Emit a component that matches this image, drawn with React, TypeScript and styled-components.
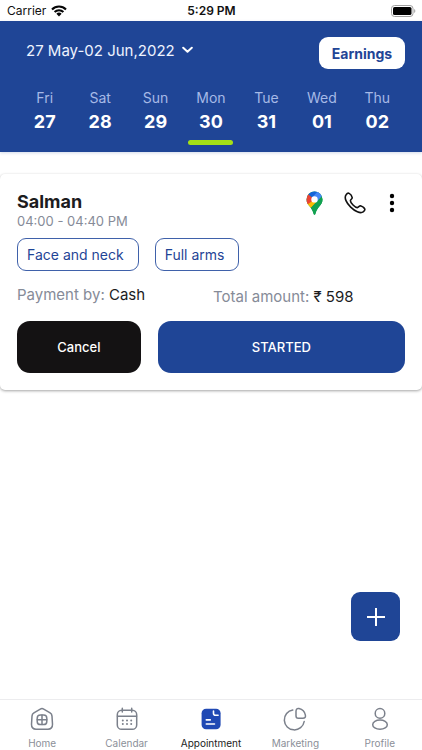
import React from "react";
import styled, { createGlobalStyle } from "styled-components";

const blue = "#1f4596";
const grey = "#868b98";
const ink = "#1c1c1e";

const GlobalStyle = createGlobalStyle`
  * { box-sizing: border-box; }
  body { margin: 0; background: #fff; font-family: Inter, "Liberation Sans", sans-serif; }
  button { font: inherit; border: 0; padding: 0; background: none; cursor: pointer; }
  h2, p { margin: 0; }
  svg { display: block; }
`;

const Screen = styled.div`
  min-height: 100vh;
  display: flex;
  flex-direction: column;
  position: relative;
`;

const StatusBar = styled.div`
  display: grid;
  grid-template-columns: 1fr auto 1fr;
  align-items: center;
  height: 21px;
  padding: 0 6px 0 7px;
  font-size: 12px;
  color: #111;
`;

const Carrier = styled.span`
  display: flex;
  align-items: center;
  gap: 5px;
`;

const Clock = styled.span`
  font-weight: 600;
`;

const Battery = styled.span`
  justify-self: end;
`;

const Header = styled.header`
  background: ${blue};
  color: #fff;
  padding: 16px 17px 7px;
  box-shadow: 0 1px 3px rgba(31, 69, 150, 0.2);
`;

const HeaderTop = styled.div`
  display: flex;
  justify-content: space-between;
  align-items: center;
  padding-left: 9px;
`;

const RangeButton = styled.button`
  display: flex;
  align-items: center;
  gap: 7px;
  height: 24px;
  margin-bottom: 6px;
  color: #eef3ff;
  font-size: 15px;
`;

const EarningsButton = styled.button`
  width: 86px;
  height: 32px;
  border-radius: 9px;
  background: #fff;
  color: ${blue};
  font-size: 14px;
  font-weight: 700;
`;

const Week = styled.div`
  display: grid;
  grid-template-columns: repeat(7, 1fr);
  margin-top: 19px;
`;

const Day = styled.button<{ $active?: boolean }>`
  display: flex;
  flex-direction: column;
  align-items: center;
  color: #fff;
  &::after {
    content: "";
    width: 45px;
    height: 5px;
    margin-top: 4px;
    border-radius: 3px;
    background: ${(p) => (p.$active ? "#a5e016" : "transparent")};
  }
`;

const DayName = styled.span`
  font-size: 14px;
  line-height: 20px;
  color: #a6b9e6;
`;

const DayNumber = styled.span`
  font-size: 18px;
  line-height: 28px;
  font-weight: 700;
`;

const Card = styled.article`
  margin-top: 22px;
  padding: 17px;
  border-radius: 5px;
  background: #fff;
  box-shadow: 0 1px 3px rgba(0, 0, 0, 0.36);
`;

const CardHead = styled.div`
  display: flex;
  justify-content: space-between;
  align-items: flex-start;
`;

const Name = styled.h2`
  font-size: 18px;
  line-height: 22px;
  font-weight: 700;
  color: ${ink};
`;

const Time = styled.p`
  font-size: 13px;
  line-height: 17px;
  color: ${grey};
`;

const Actions = styled.div`
  display: grid;
  grid-template-columns: 28px 24px 20px;
  gap: 15px;
  margin-right: 3px;
`;

const IconButton = styled.button`
  display: grid;
  place-items: center;
  height: 24px;
`;

const Chips = styled.div`
  display: flex;
  gap: 16px;
  margin-top: 8px;
`;

const Chip = styled.span`
  height: 33px;
  padding: 0 14px 0 9px;
  border: 1px solid #3f61aa;
  border-radius: 9px;
  color: ${blue};
  font-size: 14px;
  line-height: 31px;
`;

const Facts = styled.div`
  display: grid;
  grid-template-columns: 196px 1fr;
  margin-top: 14px;
  font-size: 15px;
  line-height: 20px;
  color: ${grey};
`;

const Fact = styled.p<{ $low?: boolean }>`
  padding-top: ${(p) => (p.$low ? 2 : 0)}px;
`;

const Value = styled.span`
  color: ${ink};
`;

const CardButtons = styled.div`
  display: grid;
  grid-template-columns: 1fr 2fr;
  gap: 17px;
  margin-top: 14px;
`;

const ActionButton = styled.button<{ $dark?: boolean }>`
  height: 52px;
  border-radius: 13px;
  background: ${(p) => (p.$dark ? "#141213" : blue)};
  color: #fff;
  font-size: 13px;
  font-weight: 500;
`;

const AddButton = styled.button`
  position: fixed;
  right: 22px;
  bottom: 109px;
  width: 49px;
  height: 49px;
  display: grid;
  place-items: center;
  border-radius: 9px;
  background: ${blue};
`;

const TabBar = styled.nav`
  display: grid;
  grid-template-columns: repeat(5, 1fr);
  margin-top: auto;
  height: 51px;
  border-top: 1px solid #ececee;
  background: #fff;
`;

const Tab = styled.a<{ $active?: boolean }>`
  display: flex;
  flex-direction: column;
  align-items: center;
  padding-top: 7px;
  gap: 5px;
  font-size: 10px;
  line-height: 14px;
  text-decoration: none;
  white-space: nowrap;
  color: ${(p) => (p.$active ? "#222" : "#8b8f98")};
`;

const line = { fill: "none", stroke: "#7b808b", strokeWidth: 1.5, strokeLinecap: "round", strokeLinejoin: "round" } as const;

const WifiIcon = () => (
  <svg width="16" height="12" viewBox="0 0 16 12" fill="none" stroke="#050505" strokeWidth="2.1">
    <path d="M1 4.4a9.9 9.9 0 0 1 14 0M3.6 7.1a6.2 6.2 0 0 1 8.8 0" />
    <path d="M5.4 8.8a3.7 3.7 0 0 1 5.2 0L8 11.5Z" fill="#050505" stroke="none" />
  </svg>
);

const BatteryIcon = () => (
  <svg width="25" height="12" viewBox="0 0 25 12">
    <rect x="0.5" y="0.5" width="21.5" height="11" rx="3" fill="none" stroke="#a0a0a0" />
    <rect x="2" y="2" width="18.5" height="8" rx="1.6" fill="#000" />
    <path d="M23.2 4v4c1.5-.6 1.5-3.4 0-4Z" fill="#a0a0a0" />
  </svg>
);

const ChevronIcon = () => (
  <svg width="11" height="8" viewBox="0 0 11 8" fill="none" stroke="#fff" strokeWidth="2" strokeLinecap="round" strokeLinejoin="round">
    <path d="m1.2 1.8 4.3 4 4.3-4" />
  </svg>
);

const MapPin = () => (
  <svg width="17" height="24" viewBox="0 0 17 24">
    <clipPath id="pin"><path d="M8.5.4a8 8 0 0 0-8 8c0 3 1.2 4.7 3 6.8 2 2.4 3.3 4.2 4 7.4.4 1.6 1.6 1.6 2 0 .7-3.2 2-5 4-7.4 1.8-2.1 3-3.8 3-6.8a8 8 0 0 0-8-8Z" /></clipPath>
    <g clipPath="url(#pin)">
      <path d="M0 0h17v24H0Z" fill="#12a150" />
      <path d="M-1 14.6 8.5 4l4.5 4.3L3.6 18.3Z" fill="#fbbc04" />
      <path d="M-2 1.8 2.3 3.1 8.5 8.4-.5 14.8Z" fill="#ea4335" />
      <path d="M2.2 3.2 8.5 8.4 13.5 1 7-1Z" fill="#1565d8" />
      <path d="M12.6-.5 18 3v1.5L11 11 8.5 8.4 6.3 6.2Z" fill="#4387f5" />
      <path d="M3.5 18.5 17 4.1V24H3.5Z" fill="#12a150" />
    </g>
    <circle cx="8.5" cy="8.4" r="3.2" fill="#fff" />
  </svg>
);

const PhoneIcon = () => (
  <svg width="22" height="22" viewBox="0 0 22 22" fill="none" stroke="#111" strokeWidth="1.6" strokeLinejoin="round">
    <path d="M2.1 2.8C3 1.5 4.1.8 5.2 1.4 6.4 2 8 4.5 8.2 5.6c.2 1.2-1.7 2-1.8 3.1-.1 2.1 4.8 7 6.9 6.9 1.2-.1 2-1.9 3.1-1.8 1.1.2 3.7 1.9 4.3 3 .5 1.2-.2 2.2-1.5 3.1-6 4-21.7-11-17.1-17.1Z" />
  </svg>
);

const DotsIcon = () => (
  <svg width="6" height="20" viewBox="0 0 6 20">
    <circle cx="3" cy="3" r="2.2" /><circle cx="3" cy="10" r="2.2" /><circle cx="3" cy="17" r="2.2" />
  </svg>
);

const HomeIcon = () => (
  <svg width="24" height="24" viewBox="0 0 24 24" {...line}>
    <path d="M10.3 2.1a3.4 3.4 0 0 1 3.4 0l6.4 3.8a4 4 0 0 1 1.9 3.2l.5 8.2c.1 3-1.6 4.9-4.5 4.9H6c-2.9 0-4.6-1.9-4.5-4.9L2 9.1a4 4 0 0 1 1.9-3.2Z" />
    <rect x="7.2" y="8" width="9.6" height="9.6" rx="3.2" />
    <path d="M12 8v9.6M7.2 12.8h9.6" />
  </svg>
);

const CalendarIcon = () => (
  <svg width="24" height="24" viewBox="0 0 24 24" {...line}>
    <rect x="2.3" y="3.3" width="19.4" height="19" rx="4.4" />
    <path d="M2.5 9.3h19M7.3 1.2v3.9M16.7 1.2v3.9" />
    <path d="M7.8 13.6h.01M12 13.6h.01M16.2 13.6h.01M7.8 17h.01M12 17h.01M16.2 17h.01" strokeWidth="2" />
  </svg>
);

const AppointmentIcon = () => (
  <svg width="24" height="24" viewBox="0 0 24 24" fill="none" stroke="#fff" strokeWidth="1.6" strokeLinecap="round" strokeLinejoin="round">
    <rect x="2.6" y="1.8" width="19" height="20.4" rx="4.5" fill="#2049b4" stroke="none" />
    <path d="M14.5 4v2.3c0 1.4.6 2 2 2h2.6M7.3 12.9h4M7.3 17h8.2" />
  </svg>
);

const MarketingIcon = () => (
  <svg width="24" height="24" viewBox="0 0 24 24" {...line}>
    <path d="M9.8 3a10 10 0 1 0 11.4 11.5" />
    <path d="M13 4.2c0-2 1-3 3-2.6a8.4 8.4 0 0 1 6.4 6.6c.4 2-.5 3-2.5 3H15.3c-1.5 0-2.3-.8-2.3-2.3Z" />
  </svg>
);

const ProfileIcon = () => (
  <svg width="24" height="24" viewBox="0 0 24 24" {...line}>
    <circle cx="12" cy="6.4" r="4.8" /><ellipse cx="12" cy="17.7" rx="7.3" ry="4.6" />
  </svg>
);

const days = [["Fri", "27"], ["Sat", "28"], ["Sun", "29"], ["Mon", "30"], ["Tue", "31"], ["Wed", "01"], ["Thu", "02"]];

const tabs = [
  { label: "Home", Icon: HomeIcon },
  { label: "Calendar", Icon: CalendarIcon },
  { label: "Appointment", Icon: AppointmentIcon },
  { label: "Marketing", Icon: MarketingIcon },
  { label: "Profile", Icon: ProfileIcon },
];

export default function App() {
  return (
    <Screen>
      <GlobalStyle />
      <StatusBar>
        <Carrier>Carrier <WifiIcon /></Carrier>
        <Clock>5:29 PM</Clock>
        <Battery><BatteryIcon /></Battery>
      </StatusBar>
      <Header>
        <HeaderTop>
          <RangeButton>27 May-02 Jun,2022 <ChevronIcon /></RangeButton>
          <EarningsButton>Earnings</EarningsButton>
        </HeaderTop>
        <Week>
          {days.map(([name, number]) => (
            <Day key={name} $active={number === "30"}>
              <DayName>{name}</DayName>
              <DayNumber>{number}</DayNumber>
            </Day>
          ))}
        </Week>
      </Header>
      <main>
        <Card>
          <CardHead>
            <div>
              <Name>Salman</Name>
              <Time>04:00 - 04:40 PM</Time>
            </div>
            <Actions>
              <IconButton aria-label="Directions"><MapPin /></IconButton>
              <IconButton aria-label="Call"><PhoneIcon /></IconButton>
              <IconButton aria-label="More"><DotsIcon /></IconButton>
            </Actions>
          </CardHead>
          <Chips>
            <Chip>Face and neck</Chip>
            <Chip>Full arms</Chip>
          </Chips>
          <Facts>
            <Fact>Payment by: <Value>Cash</Value></Fact>
            <Fact $low>Total amount: <Value>₹ 598</Value></Fact>
          </Facts>
          <CardButtons>
            <ActionButton $dark>Cancel</ActionButton>
            <ActionButton>STARTED</ActionButton>
          </CardButtons>
        </Card>
      </main>
      <AddButton aria-label="Add appointment">
        <svg width="20" height="20" viewBox="0 0 20 20" stroke="#fff" strokeWidth="2"><path d="M10 1v18M1 10h18" /></svg>
      </AddButton>
      <TabBar>
        {tabs.map(({ label, Icon }) => (
          <Tab key={label} href={`#${label.toLowerCase()}`} $active={label === "Appointment"}>
            <Icon />
            {label}
          </Tab>
        ))}
      </TabBar>
    </Screen>
  );
}
